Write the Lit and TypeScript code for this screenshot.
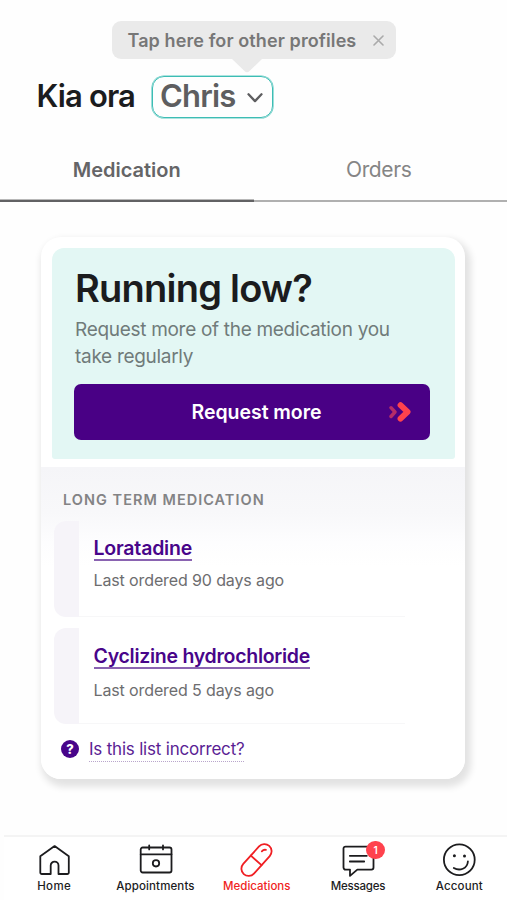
import { LitElement, html, svg, css } from "lit";
import { customElement, property, state } from "lit/decorators.js";
import { classMap } from "lit/directives/class-map.js";

const icons = {
  home: svg`<path d="M3.300 13.200 17.600 3.100 31.800 13.200v16.300a1.500 1.500 0 0 1-1.500 1.500h-8.800v-8.500a3.900 3.900 0 0 0-7.800 0V31H4.800a1.500 1.500 0 0 1-1.500-1.500z"/>`,
  calendar: svg`<rect x="2.700" y="4.500" width="30.800" height="25" rx="2"/><path d="M2.700 11.300h30.800M11.200 2.400v4M25 2.400v4"/><circle cx="18" cy="20.300" r="3.200"/>`,
  pill: svg`<g transform="rotate(-48 17.500 17)"><rect x="-1.500" y="9.800" width="38" height="14.400" rx="7.200"/><path d="M17 9.800v14.400"/></g><path d="M22.800 8.300q1.800-2 4.200-1.400"/>`,
  message: svg`<path d="M4.500 3.600h26a2 2 0 0 1 2 2v19a2 2 0 0 1-2 2H16.300L9 32.900v-6.300H4.500a2 2 0 0 1-2-2v-19a2 2 0 0 1 2-2zM8.800 12.800h17M8.800 18.500h14.400"/>`,
  smile: svg`<circle cx="17.300" cy="16.800" r="15.400"/><path d="M11.800 24.900c5.800 3.600 13.600.7 14.100-6.400"/><g fill="currentColor" stroke="none"><circle cx="12.400" cy="12.700" r="1.500"/><circle cx="22.500" cy="12.900" r="1.500"/></g>`,
};

type IconName = keyof typeof icons;

@customElement("nav-item")
class NavItem extends LitElement {
  @property() icon: IconName = "home";
  @property() label = "";
  @property({ type: Number }) badge = 0;

  static styles = css`
    :host { display: flex; flex-direction: column; align-items: center; flex: 1; color: #1c1c1e; }
    .icon { position: relative; width: 35px; height: 35px; }
    svg { display: block; overflow: visible; fill: none; stroke: currentColor; stroke-width: 1.8; stroke-linecap: round; stroke-linejoin: round; }
    .label { font-size: 11.5px; line-height: 14px; font-weight: 500; white-space: nowrap; margin-top: 1px; }
    .label.home { letter-spacing: 0.35px; }
    .label.calendar { letter-spacing: 0.13px; }
    .label.message { letter-spacing: -0.2px; }
    .label.smile { letter-spacing: 0.14px; }
    .badge { position: absolute; left: 25.8px; top: -2.7px; width: 18.5px; height: 18.5px; border-radius: 50%; background: #ff424d; color: #fff; font-size: 10px; font-weight: 600; line-height: 18.5px; text-align: center; }
  `;

  render() {
    return html`
      <div class="icon">
        <svg width="35" height="35" viewBox="0 0 35 35">${icons[this.icon]}</svg>
        ${this.badge ? html`<span class="badge">${this.badge}</span>` : ""}
      </div>
      <span class="label ${this.icon}">${this.label}</span>
    `;
  }
}

@customElement("medication-row")
class MedicationRow extends LitElement {
  @property() name = "";
  @property({ type: Number }) days = 0;

  static styles = css`
    :host { display: flex; height: 96px; width: 351px; }
    .stripe { width: 25px; flex: none; border-radius: 12px 0 0 12px; background: #f6f4f9; }
    .body { flex: 1; box-sizing: border-box; padding: var(--row-top, 16.5px) 0 0 14.5px; border-bottom: 1px solid #f7f7f8; display: flex; flex-direction: column; align-items: flex-start; gap: var(--row-gap, 8.5px); }
    .name { font-size: 19.5px; line-height: 22px; font-weight: 600; letter-spacing: var(--name-spacing, -0.25px); color: #48058a; border-bottom: 2px solid #8a63b1; white-space: nowrap; }
    .ordered { font-size: 16px; line-height: 20px; letter-spacing: -0.12px; color: #6d6d6f; white-space: nowrap; }
  `;

  render() {
    return html`
      <div class="stripe"></div>
      <div class="body">
        <a class="name">${this.name}</a>
        <span class="ordered">Last ordered ${this.days} days ago</span>
      </div>
    `;
  }
}

@customElement("app-root")
class AppRoot extends LitElement {
  @state() private tab = "Medication";

  static styles = css`
    :host { display: flex; flex-direction: column; box-sizing: border-box; height: 900px; overflow: hidden; background: #fefefe; font-family: Inter, "Liberation Sans", sans-serif; color: #1b1c1e; }
    svg { display: block; fill: none; stroke-linecap: round; stroke-linejoin: round; }
    header { padding: 21px 0 0 36.5px; }
    .tooltip { position: relative; display: flex; align-items: center; justify-content: space-between; box-sizing: border-box; width: 284.5px; height: 38px; margin-left: 75px; padding: 0 12.5px 0 16px; border-radius: 9px; background: #eaeaea; color: #777; font-size: 18px; font-weight: 600; letter-spacing: 0.1px; white-space: nowrap; }
    .pointer { position: absolute; left: 119px; top: 37px; }
    .greeting { display: flex; gap: 16.5px; margin-top: 17px; font-size: 31px; font-weight: 600; line-height: 37px; letter-spacing: -0.8px; white-space: nowrap; }
    .hello { width: 99px; padding-top: 0.5px; letter-spacing: -0.85px; }
    .profile { display: flex; box-sizing: border-box; width: 120.5px; height: 41.5px; padding: 0 9px 0 7px; justify-content: space-between; border: 1px solid #3dbdb4; box-shadow: 0 0 0 0.6px #5cc9c1; border-radius: 12px; color: #5e5e60; }
    .profile svg { margin-top: 16px; }
    .tabs { display: flex; height: 84px; box-sizing: border-box; }
    .tab { flex: 1; box-sizing: border-box; padding-top: 40px; border-bottom: 2px solid #b0b0b0; text-align: center; line-height: 24px; font-size: 21px; letter-spacing: -0.35px; color: #858585; }
    .tab span { margin-right: 3px; }
    .tab.active { padding-top: 40.5px; border-bottom: 2px solid #626264; box-shadow: inset 0 -1px 0 #b8b8b8; font-size: 20px; font-weight: 600; letter-spacing: 0; color: #656567; }
    .tab.active span { margin-right: 0; }
    .card { box-sizing: border-box; width: 424px; height: 542px; margin: 35px 0 0 41px; border-radius: 20px; background: #fff; box-shadow: 3px 5px 7px 3px rgba(0, 0, 0, 0.11); }
    .promo { box-sizing: border-box; height: 210.5px; margin: 0 10.5px 0 11px; padding: 17.5px 24.5px 0 22px; border-radius: 12px 12px 3px 3px; background: #e3f7f4; }
    .promo-wrap { box-sizing: border-box; padding-top: 11.5px; height: 230.5px; }
    h1 { margin: 0; padding-left: 1px; font-size: 38px; font-weight: 600; line-height: 44px; letter-spacing: -0.75px; white-space: nowrap; }
    p { margin: 6px 0 14.5px 1px; font-size: 19px; line-height: 27px; letter-spacing: -0.3px; color: #707b7a; white-space: nowrap; }
    .cta { display: grid; grid-template-columns: 1fr auto 1fr; align-items: center; height: 55.5px; border-radius: 7px; background: #490085; color: #fff; font-size: 19.5px; font-weight: 600; }
    .cta span { grid-column: 2; margin-left: 9px; letter-spacing: -0.05px; }
    .cta svg { justify-self: end; margin-right: 19px; margin-top: 1px; }
    .list { box-sizing: border-box; height: 311.5px; padding: 22.5px 0 0 13px; border-radius: 0 0 20px 20px; background: linear-gradient(#f5f5f8 0, #f8f8fa 45px, #fdfdfe 75px, #fff 100px); }
    h2 { margin: 0 0 11px 9px; font-size: 14.5px; font-weight: 600; line-height: 20px; letter-spacing: 1.02px; color: #838385; white-space: nowrap; }
    .rows { display: flex; flex-direction: column; gap: 11px; }
    .rows .long { --row-top: 17px; --row-gap: 11.5px; --name-spacing: -0.27px; }
    .rows .short { --name-spacing: -0.2px; }
    .help { display: flex; align-items: center; gap: 10px; margin: 14px 0 0 7px; color: #5a1e94; }
    .mark { width: 18px; height: 18px; margin-bottom: 1px; border-radius: 50%; background: #48058a; color: #fff; font-size: 13px; font-weight: 800; line-height: 18px; text-align: center; }
    .question { padding-bottom: 1px; border-bottom: 1px dotted #b9a6cc; font-size: 17px; line-height: 22px; letter-spacing: -0.2px; white-space: nowrap; }
    nav { display: flex; box-sizing: border-box; height: 65.5px; margin: auto -3px 0 3.5px; padding-top: 6.7px; border-top: 2px solid #f4f4f4; background: #fff; }
    .current { color: #f01f23; }
  `;

  render() {
    return html`
      <header>
        <div class="tooltip">
          <span>Tap here for other profiles</span>
          <svg width="11" height="11" viewBox="0 0 11 11" stroke="#aaa" stroke-width="1.6"><path d="M1 1l9 9M10 1l-9 9"/></svg>
          <svg class="pointer" width="32" height="15" viewBox="0 0 32 15"><path d="M0 0h32L18.5 13q-2.500 2.400-5 0z" fill="#eaeaea"/></svg>
        </div>
        <div class="greeting">
          <span class="hello">Kia ora</span>
          <div class="profile">
            <span>Chris</span>
            <svg width="16" height="10" viewBox="0 0 16 10" stroke="#5e5e60" stroke-width="2.300"><path d="M1.500 1.300 8 8.100l6.500-6.800"/></svg>
          </div>
        </div>
      </header>
      <div class="tabs">
        ${["Medication", "Orders"].map((t) => html`
          <div class=${classMap({ tab: true, active: t === this.tab })} @click=${() => (this.tab = t)}><span>${t}</span></div>
        `)}
      </div>
      <section class="card">
        <div class="promo-wrap">
          <div class="promo">
            <h1>Running low?</h1>
            <p>Request more of the medication you<br>take regularly</p>
            <div class="cta">
              <span>Request more</span>
              <svg width="22" height="20" viewBox="0 0 22 20">
                <path d="M2 5.700 6 10l-4 4.500" stroke="#b52c68" stroke-width="3.400"/>
                <path d="M11.500 3.200 18.600 9.900 11.500 16.700" stroke="#ff424d" stroke-width="5.800"/>
              </svg>
            </div>
          </div>
        </div>
        <div class="list">
          <h2>LONG TERM MEDICATION</h2>
          <div class="rows">
            <medication-row class="short" name="Loratadine" days="90"></medication-row>
            <medication-row class="long" name="Cyclizine hydrochloride" days="5"></medication-row>
          </div>
          <div class="help">
            <span class="mark">?</span>
            <span class="question">Is this list incorrect?</span>
          </div>
        </div>
      </section>
      <nav>
        <nav-item icon="home" label="Home"></nav-item>
        <nav-item icon="calendar" label="Appointments"></nav-item>
        <nav-item class="current" icon="pill" label="Medications"></nav-item>
        <nav-item icon="message" label="Messages" badge="1"></nav-item>
        <nav-item icon="smile" label="Account"></nav-item>
      </nav>
    `;
  }
}
